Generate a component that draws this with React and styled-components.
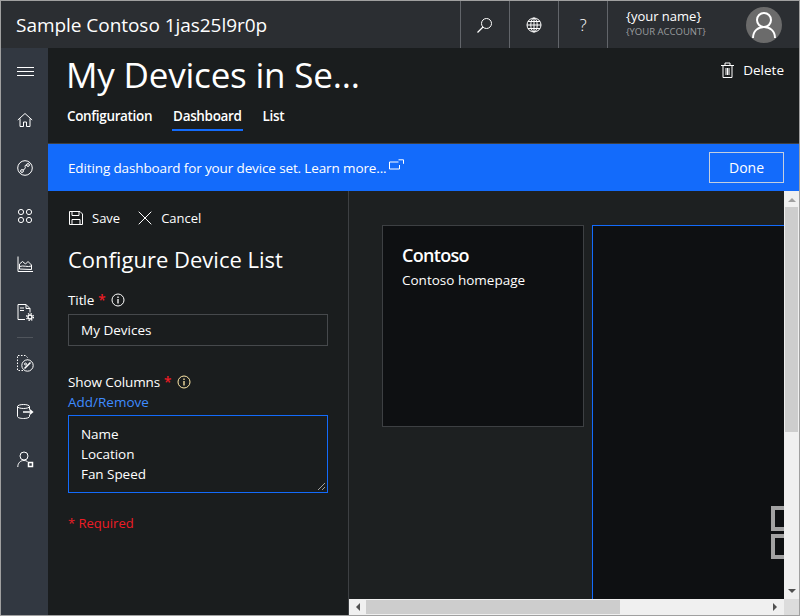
import React from "react";
import styled, { createGlobalStyle } from "styled-components";

const Global = createGlobalStyle`
  html, body { margin: 0; padding: 0; background: #1a1d1e; }
  * { box-sizing: border-box; }
`;
const font = `"Open Sans", "Noto Sans", sans-serif`;

const Frame = styled.div`
  width: 800px; height: 616px; overflow: hidden;
  border: 1px solid #a0a0a0;
  display: flex; flex-direction: column;
  font-family: ${font}; color: #fff; background: #1a1d1e;
`;
const Header = styled.header`
  height: 47px; flex: none; display: flex; align-items: stretch; background: #2b2e32;
`;
const Brand = styled.div`
  flex: 1; padding-left: 15px; font-size: 19px; line-height: 49px; letter-spacing: -0.04px; white-space: nowrap;
`;
const HeadBtn = styled.div`
  width: 49px; border-left: 1px solid #62656a; display: flex; align-items: center; justify-content: center;
  font-size: 17px; font-weight: 300;
`;
const Account = styled.div`
  width: 192px; border-left: 1px solid #62656a; display: flex; align-items: center; padding: 0 17px 0 18px; justify-content: space-between;
`;
const Who = styled.div`
  display: flex; flex-direction: column; margin-top: -3px;
`;
const Name = styled.span` font-size: 13px; line-height: 17px; `;
const Org = styled.span` font-size: 9.5px; line-height: 13px; color: #9a9c9f; `;
const Avatar = styled.div`
  width: 36px; height: 36px; border-radius: 50%; background: #6b6b6b; display: flex; align-items: center; justify-content: center;
`;
const Body = styled.div` flex: 1; display: flex; min-height: 0; `;
const Sidebar = styled.nav`
  width: 47px; flex: none; background: #323841; display: flex; flex-direction: column; align-items: center;
`;
const NavItem = styled.div`
  height: 48px; width: 100%; display: flex; align-items: center; justify-content: center; flex: none;
  padding-left: 1px;
`;
const NavRule = styled.div`
  width: 16px; height: 1px; background: #50555c; flex: none; margin: 1px 0;
`;
const Main = styled.main` flex: 1; min-width: 0; display: flex; flex-direction: column; `;
const PageHead = styled.div`
  height: 96px; flex: none; background: #1a1d1e; border-bottom: 1px solid #3d4043; padding: 0 15px 0 19px;
  display: flex; flex-direction: column;
`;
const TitleRow = styled.div` display: flex; justify-content: space-between; align-items: flex-start; `;
const PageTitle = styled.h1`
  margin: 0 0 0 -1px; font-weight: 400; font-size: 35px; line-height: 53px; white-space: nowrap; letter-spacing: -0.2px;
`;
const Delete = styled.div`
  display: flex; align-items: center; gap: 9px; font-size: 13.5px; margin-top: 14px; line-height: 16px;
`;
const Tabs = styled.div` display: flex; gap: 21px; margin-top: 3px; `;
const Tab = styled.div`
  font-size: 13.5px; font-weight: 600; height: 27px; line-height: 24px; letter-spacing: -0.35px;
  border-bottom: 2px solid ${p => (p.$active ? "#136bfb" : "transparent")};
  padding: 0 1px; margin: 0 -1px;
`;
const Banner = styled.div`
  height: 47px; flex: none; background: #136bfb; display: flex; align-items: center; justify-content: space-between; padding: 0 15px 0 20px;
  font-size: 13.5px; letter-spacing: -0.13px;
`;
const BannerText = styled.div` display: flex; align-items: flex-start; gap: 3px; `;
const DoneBtn = styled.div`
  width: 75px; height: 31px; border: 1px solid #c4cfe0; display: flex; align-items: center; justify-content: center; font-size: 14px; letter-spacing: 0;
`;
const Work = styled.div` flex: 1; display: flex; min-height: 0; `;
const Panel = styled.section`
  width: 301px; flex: none; border-right: 1px solid #3d4043; padding: 16px 20px 0; display: flex; flex-direction: column;
`;
const Actions = styled.div` display: flex; align-items: center; font-size: 13px; height: 22px; margin-left: 1px; `;
const Action = styled.div` display: flex; align-items: center; gap: 9px; margin-right: 18px; `;
const PanelTitle = styled.h2`
  margin: 15px 0 0; font-weight: 400; font-size: 22px; line-height: 30px; letter-spacing: 0;
`;
const Label = styled.div`
  display: flex; align-items: center; font-size: 13.5px; line-height: 20px; letter-spacing: -0.1px; margin-top: ${p => p.$top}px;
`;
const Star = styled.span` color: #ee1c25; margin: 0 6px 0 4px; font-weight: 600; `;
const Input = styled.div`
  height: 32px; border: 1px solid #46494c; padding: 0 12px; font-size: 13.5px; line-height: 31px; margin-top: 4px;
`;
const Link = styled.div` color: #3f8cff; font-size: 13.5px; line-height: 20px; `;
const Area = styled.div`
  height: 78px; border: 1px solid #136bfb; padding: 8px 12px; font-size: 13.5px; line-height: 20px; margin-top: 3px; position: relative; letter-spacing: -0.05px;
`;
const Grip = styled.svg` position: absolute; right: 1px; bottom: 1px; `;
const Required = styled.div` color: #ee1c25; font-size: 13px; line-height: 18px; margin-top: 21px; `;
const Canvas = styled.section`
  flex: 1; min-width: 0; display: grid; grid-template-columns: 1fr 15px; grid-template-rows: 1fr 16px; background: #1d2021; min-height: 0;
`;
const Viewport = styled.div`
  overflow: hidden; padding: 34px 0 0 33px; display: flex; gap: 8px; align-items: flex-start;
`;
const Tile = styled.div`
  width: 202px; height: 202px; flex: none; background: #0e1012; border: 1px solid #3d4043; padding: 17px 19px;
`;
const TileTitle = styled.div` font-size: 18px; font-weight: 600; line-height: 24px; letter-spacing: -0.7px; `;
const TileText = styled.div` font-size: 13.5px; line-height: 20px; margin-top: 3px; `;
const BigTile = styled.div`
  flex: 1; height: 400px; background: #0e1012; border-left: 1px solid #136bfb; border-top: 1px solid #136bfb;
  display: flex; flex-direction: column; align-items: flex-end; padding-top: 280px; gap: 3px;
`;
const Bracket = styled.div`
  width: 13px; height: 25px; border: 4px solid #a2a2a2; border-right: 0;
`;
const VTrack = styled.div`
  background: #f0f0f0; display: flex; flex-direction: column; align-items: stretch;
`;
const HTrack = styled.div`
  background: #f0f0f0; display: flex; align-items: stretch;
`;
const Arrow = styled.div`
  flex: none; display: flex; align-items: center; justify-content: center; ${p => (p.$v ? "height: 16px;" : "width: 17px;")}
`;
const VThumb = styled.div` height: 225px; background: #cdcdcd; margin: 0 1px; `;
const HThumb = styled.div` width: 254px; background: #cdcdcd; margin: 1px 0; `;
const Gap = styled.div` flex: 1; `;
const Corner = styled.div` background: #dcdcdc; `;

const S = { fill: "none", stroke: "#fff", strokeWidth: 1 };
const Ico = ({ w = 18, h = 18, children }) => (
  <svg width={w} height={h} viewBox={`0 0 ${w} ${h}`} {...S}>{children}</svg>
);
const Info = ({ c = "#fff" }) => (
  <svg width="14" height="14" viewBox="0 0 14 14" fill="none" stroke={c}>
    <circle cx="7" cy="7" r="6" /><path d="M7 6v4.5M7 3.5v1.5" strokeWidth="1.3" />
  </svg>
);

export default function App() {
  return (
    <>
      <Global />
      <Frame>
        <Header>
          <Brand>Sample Contoso 1jas25l9r0p</Brand>
          <HeadBtn>
            <Ico><circle cx="10.5" cy="7.5" r="5" /><path d="M7 11l-5.5 5.5" strokeWidth="1.3" /></Ico>
          </HeadBtn>
          <HeadBtn>
            <Ico w={16} h={16}><circle cx="8" cy="8" r="7" /><ellipse cx="8" cy="8" rx="3.2" ry="7" /><path d="M8 1v14M1 8h14M2 4.5h12M2 11.5h12" /></Ico>
          </HeadBtn>
          <HeadBtn>?</HeadBtn>
          <Account>
            <Who><Name>{"{your name}"}</Name><Org>{"{YOUR ACCOUNT}"}</Org></Who>
            <Avatar>
              <svg width="26" height="27" viewBox="0 0 26 27" fill="none" stroke="#fff" strokeWidth="2">
                <circle cx="13" cy="9" r="7" /><path d="M2 27c0-7 5-11 11-11s11 4 11 11" />
              </svg>
            </Avatar>
          </Account>
        </Header>
        <Body>
          <Sidebar>
            <NavItem>
              <Ico w={17} h={12}><path d="M0 1.5h17M0 5.5h17M0 9.5h17" /></Ico>
            </NavItem>
            <NavItem>
              <Ico w={16} h={16}><path d="M.8 8L8 1.5 15.2 8M3 6.500v8h3.500v-4.500h3v4.500H13v-8" /></Ico>
            </NavItem>
            <NavItem>
              <Ico w={16} h={16}><circle cx="8" cy="8" r="7.3" /><circle cx="5" cy="11" r="1.4" /><circle cx="11" cy="5" r="1.4" /><path d="M6 10.200L8 8.600c1-1-.5-2 .3-3.200L10 5" /></Ico>
            </NavItem>
            <NavItem>
              <Ico w={16} h={16}><circle cx="4" cy="4" r="2.600" /><circle cx="12" cy="4" r="2.600" /><circle cx="4" cy="12" r="2.600" /><circle cx="12" cy="12" r="2.600" /></Ico>
            </NavItem>
            <NavItem>
              <Ico w={16} h={16}><path d="M1 .5v15h15" /><path d="M2.500 13V8l3-2.500 3 2.500 2.500-2.500 3.500 3.500v4.500zM2.500 10.500c4-1.500 8 1 12-.5" /></Ico>
            </NavItem>
            <NavItem>
              <Ico w={17} h={17}><path d="M8 15.500H1V.5h8l4 4v4" /><path d="M9 .5v4h4M3 4h4M3 6.500h4" /><circle cx="13" cy="13" r="2" strokeWidth="1.4" /><circle cx="13" cy="13" r="3.400" strokeDasharray="1.3 1.4" strokeWidth="1.3" /></Ico>
            </NavItem>
            <NavRule />
            <NavItem>
              <Ico w={17} h={17}><path d="M6 15.500H.5V.5h8l2 2v2" strokeDasharray="1.500 1.500" /><circle cx="10.500" cy="10.500" r="5.700" /><path d="M7.500 13.500l6-6" strokeWidth="1.600" /><circle cx="8.500" cy="9" r="1" /></Ico>
            </NavItem>
            <NavItem>
              <Ico w={17} h={15}><ellipse cx="6.500" cy="2.500" rx="6" ry="2" /><path d="M.5 2.500v10c0 1.100 2.700 2 6 2s6-.9 6-2V11M12.500 2.500v3" /><path d="M6 8h9M12.500 5.500L15.500 8l-3 2.500" strokeWidth="1.400" /></Ico>
            </NavItem>
            <NavItem>
              <Ico w={17} h={17}><circle cx="7" cy="5" r="4" /><path d="M.8 16c0-4 2.500-6.500 6.200-6.500 1.300 0 2.500.3 3.500 1" /><rect x="11.500" y="11.500" width="4" height="4" strokeWidth="1.500" /></Ico>
            </NavItem>
          </Sidebar>
          <Main>
            <PageHead>
              <TitleRow>
                <PageTitle>My Devices in Se...</PageTitle>
                <Delete>
                  <Ico w={13} h={16}><path d="M2 3.500v12h9v-12M0 3.500h13M4 3.500v-2.500h5v2.500M5 6v7M6.500 6v7M8 6v7" /></Ico>
                  Delete
                </Delete>
              </TitleRow>
              <Tabs>
                <Tab>Configuration</Tab>
                <Tab $active>Dashboard</Tab>
                <Tab>List</Tab>
              </Tabs>
            </PageHead>
            <Banner>
              <BannerText>
                Editing dashboard for your device set. Learn more...
                <Ico w={15} h={11}><path d="M.5 3v7h10V6" /><path d="M.5 3h9M9.500 .8h5M14.500 .8v4" /></Ico>
              </BannerText>
              <DoneBtn>Done</DoneBtn>
            </Banner>
            <Work>
              <Panel>
                <Actions>
                  <Action>
                    <Ico w={14} h={14}><path d="M.5.5h10.500l2.500 2.500v10.500H.5z" /><path d="M3 .5v4h7v-4M3 13.500v-5h8v5" /></Ico>
                    Save
                  </Action>
                  <Action>
                    <Ico w={14} h={14}><path d="M.7.7l12.600 12.600M13.300.7L.7 13.300" /></Ico>
                    Cancel
                  </Action>
                </Actions>
                <PanelTitle>Configure Device List</PanelTitle>
                <Label $top={16}>Title<Star>*</Star><Info /></Label>
                <Input>My Devices</Input>
                <Label $top={26}>Show Columns<Star>*</Star><Info c="#ffe9a8" /></Label>
                <Link>Add/Remove</Link>
                <Area>
                  Name<br />Location<br />Fan Speed
                  <Grip width="9" height="9" viewBox="0 0 9 9" stroke="#a0a0a0"><path d="M1 8l7-7M5 8l3-3" /></Grip>
                </Area>
                <Required>* Required</Required>
              </Panel>
              <Canvas>
                <Viewport>
                  <Tile>
                    <TileTitle>Contoso</TileTitle>
                    <TileText>Contoso homepage</TileText>
                  </Tile>
                  <BigTile>
                    <Bracket />
                    <Bracket />
                  </BigTile>
                </Viewport>
                <VTrack>
                  <Arrow $v><svg width="8" height="5"><path d="M0 5l4-4 4 4z" fill="#a0a0a0" /></svg></Arrow>
                  <VThumb />
                  <Gap />
                  <Arrow $v><svg width="8" height="5"><path d="M0 0l4 4 4-4z" fill="#505050" /></svg></Arrow>
                </VTrack>
                <HTrack>
                  <Arrow><svg width="5" height="8"><path d="M5 0L1 4l4 4z" fill="#505050" /></svg></Arrow>
                  <HThumb />
                  <Gap />
                  <Arrow><svg width="5" height="8"><path d="M0 0l4 4-4 4z" fill="#505050" /></svg></Arrow>
                </HTrack>
                <Corner />
              </Canvas>
            </Work>
          </Main>
        </Body>
      </Frame>
    </>
  );
}
